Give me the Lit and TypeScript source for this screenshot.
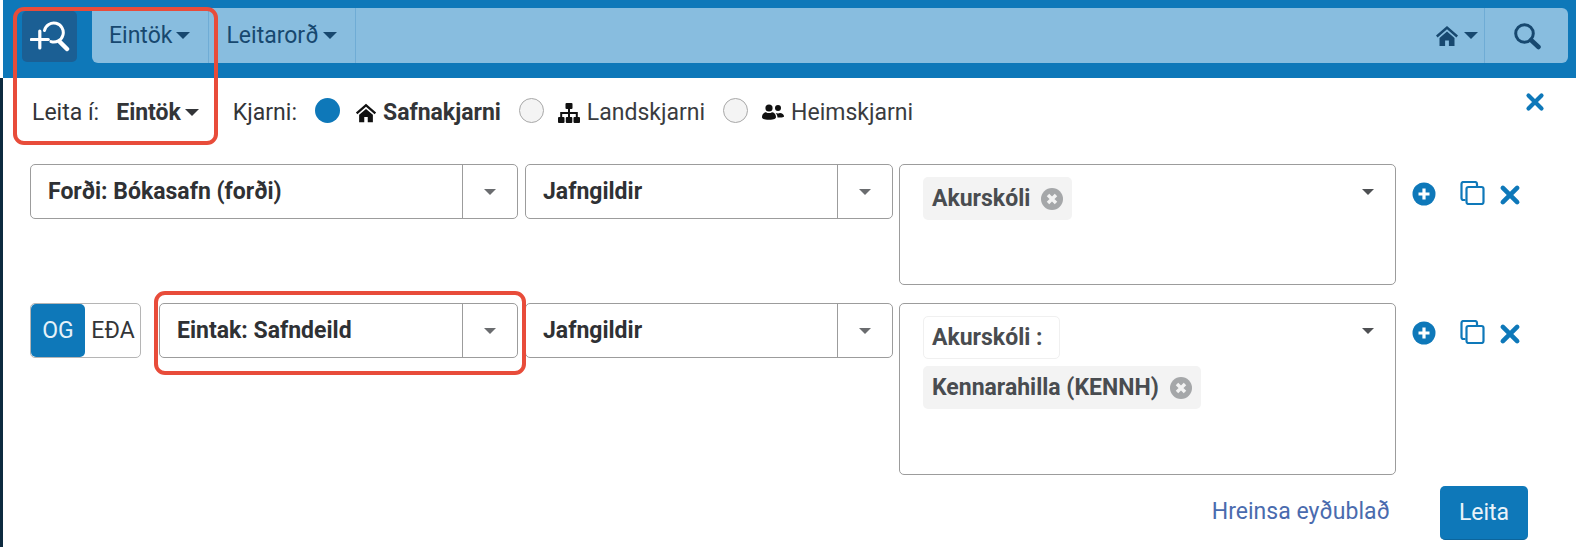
import { LitElement, html, css, svg } from 'lit';
import { customElement } from 'lit/decorators.js';

const home = (size: number) => html`<svg width=${size} height=${size} viewBox="0 0 24 24" fill="currentColor">
  <path d="M12 2 1 11.5l1.6 1.9L12 5.3l9.4 8.1 1.6-1.9z" />
  <path d="M12 7.6 4.5 14v8h5.6v-5.6h3.8V22h5.6v-8z" />
</svg>`;

const sitemap = html`<svg width="24" height="22" viewBox="0 0 24 22" fill="currentColor">
  <rect x="8.5" y="1" width="7" height="6" rx="1" />
  <rect x="1" y="15" width="6.5" height="6" rx="1" />
  <rect x="8.8" y="15" width="6.5" height="6" rx="1" />
  <rect x="16.5" y="15" width="6.5" height="6" rx="1" />
  <path d="M11 7h2v3h7.8v5h-2v-3H13v3h-2v-3H5.2v3h-2v-5H11z" />
</svg>`;

const users = html`<svg width="24" height="20" viewBox="0 0 24 20" fill="currentColor">
  <circle cx="8" cy="5" r="3.6" />
  <circle cx="17" cy="5" r="3" />
  <path d="M1 14c0-3 2.500-4.800 4-4.800 1 .6 1.800 .9 3 .9s2-.3 3-.9c1.800 0 4 1.800 4 4.800 0 1.500-1.500 2.800-7 2.800s-7-1.300-7-2.800z" />
  <path d="M16.500 14.500c0-2-.8-3.500-1.800-4.600 1 .2 1.500.5 2.300.5s1.400-.3 2-.5c2 0 4 1.400 4 3.300 0 1-1.500 1.300-6.500 1.300z" />
</svg>`;

const times = (size: number) => html`<svg width=${size} height=${size} viewBox="0 0 20 20">
  <path d="M3.500 3.500l13 13M16.500 3.500l-13 13" stroke="currentColor" stroke-width="4.200" stroke-linecap="round" fill="none" />
</svg>`;

const plusCircle = html`<svg width="24" height="24" viewBox="0 0 24 24">
  <circle cx="12" cy="12" r="11.500" fill="currentColor" />
  <path d="M12 6.500v11M6.500 12h11" stroke="#fff" stroke-width="3.200" />
</svg>`;

const copy = html`<svg width="25" height="24" viewBox="0 0 25 24" fill="none" stroke="currentColor" stroke-width="2.200">
  <path d="M5.500 19H3.500A2 2 0 0 1 1.500 17V3a2 2 0 0 1 2-2H15a2 2 0 0 1 2 2v2.500" />
  <rect x="6.500" y="6" width="17" height="17" rx="2" />
</svg>`;

const chipClose = html`<svg width="22" height="22" viewBox="0 0 22 22">
  <circle cx="11" cy="11" r="11" fill="#a5a7a9" />
  <path d="M7 7l8 8M15 7l-8 8" stroke="#f3f3f3" stroke-width="3.500" />
</svg>`;

const search = html`<svg width="28" height="28" viewBox="0 0 28 28" fill="none" stroke="#17486f">
  <circle cx="11.500" cy="11.500" r="8.800" stroke-width="3" />
  <path d="M18 18l7.500 7" stroke-width="4.500" stroke-linecap="round" />
</svg>`;

const logo = svg`<svg width="40" height="32" viewBox="0 0 40 32" fill="none" stroke="#fff" stroke-linecap="round">
  <path d="M9.800 10v17M1.300 18.500h17" stroke-width="3.200" />
  <path d="M14.500 9.500A9.500 9.500 0 1 1 21 20.600" stroke-width="3" />
  <path d="M29.500 20.500l7.500 7.500" stroke-width="4.500" />
</svg>`;

@customElement('app-root')
export class AppRoot extends LitElement {
  static styles = css`
    :host {
      display: block;
      position: relative;
      width: 1576px;
      height: 547px;
      overflow: hidden;
      background: #fff;
      font-family: Roboto, 'Liberation Sans', sans-serif;
      font-size: 23px;
      color: #333538;
    }
    .top {
      box-sizing: border-box;
      height: 78px;
      margin-left: 3px;
      padding: 8px 8px 0 19px;
      display: flex;
      align-items: flex-start;
      background: #0e78b9;
    }
    .logo {
      width: 55px;
      height: 51px;
      margin-top: 3px;
      margin-right: 15px;
      border-radius: 5px;
      background: #1b5f94;
      display: flex;
      align-items: center;
      justify-content: center;
    }
    .nav {
      flex: 1;
      height: 55px;
      display: flex;
      align-items: stretch;
      background: #88bddf;
      border-radius: 0 6px 6px 6px;
      color: #17486f;
    }
    .nav-item {
      display: flex;
      align-items: center;
      gap: 4px;
      border-right: 1px solid #6facd5;
      padding: 0 18px 0 17px;
    }
    .nav-spacer {
      flex: 1;
    }
    .nav-home {
      box-sizing: border-box;
      display: flex;
      align-items: center;
      gap: 5px;
      width: 56px;
      padding-left: 6px;
      border-right: 1px solid #6facd5;
    }
    .nav-search {
      width: 83px;
      display: flex;
      align-items: center;
      justify-content: center;
    }
    .caret {
      display: inline-block;
      width: 0;
      height: 0;
      border-left: 7px solid transparent;
      border-right: 7px solid transparent;
      border-top: 7px solid currentColor;
    }
    .panel {
      box-sizing: border-box;
      height: 469px;
      border-left: 3px solid #0d2a3f;
      padding: 0 0 0 27px;
    }
    .scope {
      height: 66px;
      display: flex;
      align-items: center;
      margin-left: 2px;
      padding-top: 3px;
      box-sizing: border-box;
    }
    .scope-label {
      margin-right: 17px;
    }
    .scope-value {
      display: flex;
      align-items: center;
      gap: 4px;
      font-weight: 700;
      margin-right: 34px;
    }
    .kjarni {
      margin-right: 18px;
    }
    .radio {
      box-sizing: border-box;
      width: 25px;
      height: 25px;
      margin-top: -4px;
      margin-right: 13px;
      border-radius: 50%;
      border: 1px solid #a8a8a8;
      background: #f4f4f4;
    }
    .radio.on {
      margin-right: 15px;
      border: 0;
      background: #0e78b9;
    }
    .scope-option {
      display: flex;
      align-items: center;
      gap: 6px;
      margin-right: 18px;
      color: #3a3c3f;
    }
    .scope-option.on {
      font-weight: 700;
      color: #333538;
    }
    .scope-option svg {
      color: #111;
    }
    .close {
      margin-left: auto;
      margin-right: 31px;
      margin-top: -22px;
      color: #0e78b9;
      display: flex;
    }
    .row {
      display: flex;
      align-items: flex-start;
      margin-top: 20px;
    }
    .row + .row {
      margin-top: 18px;
    }
    .select {
      box-sizing: border-box;
      height: 55px;
      display: flex;
      align-items: stretch;
      border: 1px solid #9c9c9c;
      border-radius: 5px;
      margin-right: 7px;
      font-weight: 700;
      color: #2f3134;
    }
    .select-label {
      flex: 1;
      display: flex;
      align-items: center;
      padding-left: 17px;
    }
    .select-btn {
      width: 54px;
      display: flex;
      align-items: center;
      justify-content: center;
      border-left: 1px solid #9c9c9c;
      color: #6a6c6f;
    }
    .select-btn .caret {
      border-left-width: 6.500px;
      border-right-width: 6.500px;
      border-top-width: 6.500px;
    }
    .w-long {
      width: 488px;
    }
    .w-short {
      width: 359px;
    }
    .w-mid {
      width: 368px;
      margin-right: 6px;
    }
    .toggle {
      box-sizing: border-box;
      width: 111px;
      height: 55px;
      margin-right: 18px;
      display: flex;
      align-items: stretch;
      border: 1px solid #b5b5b5;
      border-radius: 5px;
    }
    .toggle span {
      display: flex;
      align-items: center;
      justify-content: center;
    }
    .toggle .og {
      width: 54px;
      background: #0e78b9;
      color: #e6f1f8;
      border-radius: 5px;
    }
    .toggle .eda {
      flex: 1;
      padding-left: 1px;
      color: #333538;
    }
    .multi {
      box-sizing: border-box;
      position: relative;
      width: 497px;
      padding: 12px 23px;
      border: 1px solid #9c9c9c;
      border-radius: 5px;
      display: flex;
      flex-direction: column;
      align-items: flex-start;
      gap: 7px;
      font-weight: 700;
      color: #494c50;
    }
    .multi.h1 {
      height: 121px;
    }
    .multi.h2 {
      height: 172px;
    }
    .multi .caret {
      position: absolute;
      top: 24px;
      right: 21px;
      color: #4e5053;
      border-left-width: 6.500px;
      border-right-width: 6.500px;
      border-top-width: 6.500px;
    }
    .chip {
      box-sizing: border-box;
      height: 43px;
      padding: 0 9px;
      display: flex;
      align-items: center;
      gap: 11px;
      background: #f3f3f3;
      border-radius: 5px;
    }
    .chip.plain {
      background: #fff;
      border: 1px solid #f0f0f0;
      padding: 0 16px 0 8px;
    }
    .actions {
      display: flex;
      align-items: flex-start;
      margin-left: 16px;
      margin-top: 18px;
      color: #0e78b9;
    }
    .actions svg:nth-child(2) {
      margin-left: 24px;
      margin-top: -1px;
    }
    .actions svg:nth-child(3) {
      margin-left: 14px;
      margin-top: 2px;
    }
    .foot {
      display: flex;
      align-items: center;
      justify-content: flex-end;
      margin-top: 11px;
      padding-right: 48px;
    }
    .link {
      color: #4a6bae;
      margin-right: 50px;
      margin-top: -3px;
    }
    .go {
      box-sizing: border-box;
      width: 88px;
      height: 54px;
      display: flex;
      align-items: center;
      justify-content: center;
      border-radius: 5px;
      background: #0e78b9;
      color: #eaf3f9;
      border-bottom: 1px solid #0c659c;
    }
    .mark {
      position: absolute;
      box-sizing: border-box;
      border: 4px solid #e84c3a;
      border-radius: 11px;
      pointer-events: none;
    }
    .mark.a {
      left: 13px;
      top: 7px;
      width: 205px;
      height: 138px;
    }
    .mark.b {
      left: 154px;
      top: 291px;
      width: 372px;
      height: 84px;
    }
  `;

  private select(label: string, width: string) {
    return html`<div class="select ${width}">
      <div class="select-label">${label}</div>
      <div class="select-btn"><span class="caret"></span></div>
    </div>`;
  }

  private actions() {
    return html`<div class="actions">${plusCircle}${copy}${times(22)}</div>`;
  }

  render() {
    return html`
      <div class="top">
        <div class="logo">${logo}</div>
        <div class="nav">
          <div class="nav-item">Eintök <span class="caret"></span></div>
          <div class="nav-item">Leitarorð <span class="caret"></span></div>
          <div class="nav-spacer"></div>
          <div class="nav-home">${home(24)}<span class="caret"></span></div>
          <div class="nav-search">${search}</div>
        </div>
      </div>
      <div class="panel">
        <div class="scope">
          <span class="scope-label">Leita í:</span>
          <span class="scope-value">Eintök <span class="caret"></span></span>
          <span class="kjarni">Kjarni:</span>
          <span class="radio on"></span>
          <span class="scope-option on">${home(22)}Safnakjarni</span>
          <span class="radio"></span>
          <span class="scope-option">${sitemap}Landskjarni</span>
          <span class="radio"></span>
          <span class="scope-option">${users}Heimskjarni</span>
          <span class="close">${times(20)}</span>
        </div>
        <div class="row">
          ${this.select('Forði: Bókasafn (forði)', 'w-long')}
          ${this.select('Jafngildir', 'w-mid')}
          <div class="multi h1">
            <span class="caret"></span>
            <div class="chip">Akurskóli ${chipClose}</div>
          </div>
          ${this.actions()}
        </div>
        <div class="row">
          <div class="toggle"><span class="og">OG</span><span class="eda">EÐA</span></div>
          ${this.select('Eintak: Safndeild', 'w-short')}
          ${this.select('Jafngildir', 'w-mid')}
          <div class="multi h2">
            <span class="caret"></span>
            <div class="chip plain">Akurskóli :</div>
            <div class="chip">Kennarahilla (KENNH) ${chipClose}</div>
          </div>
          ${this.actions()}
        </div>
        <div class="foot">
          <span class="link">Hreinsa eyðublað</span>
          <span class="go">Leita</span>
        </div>
      </div>
      <div class="mark a"></div>
      <div class="mark b"></div>
    `;
  }
}
